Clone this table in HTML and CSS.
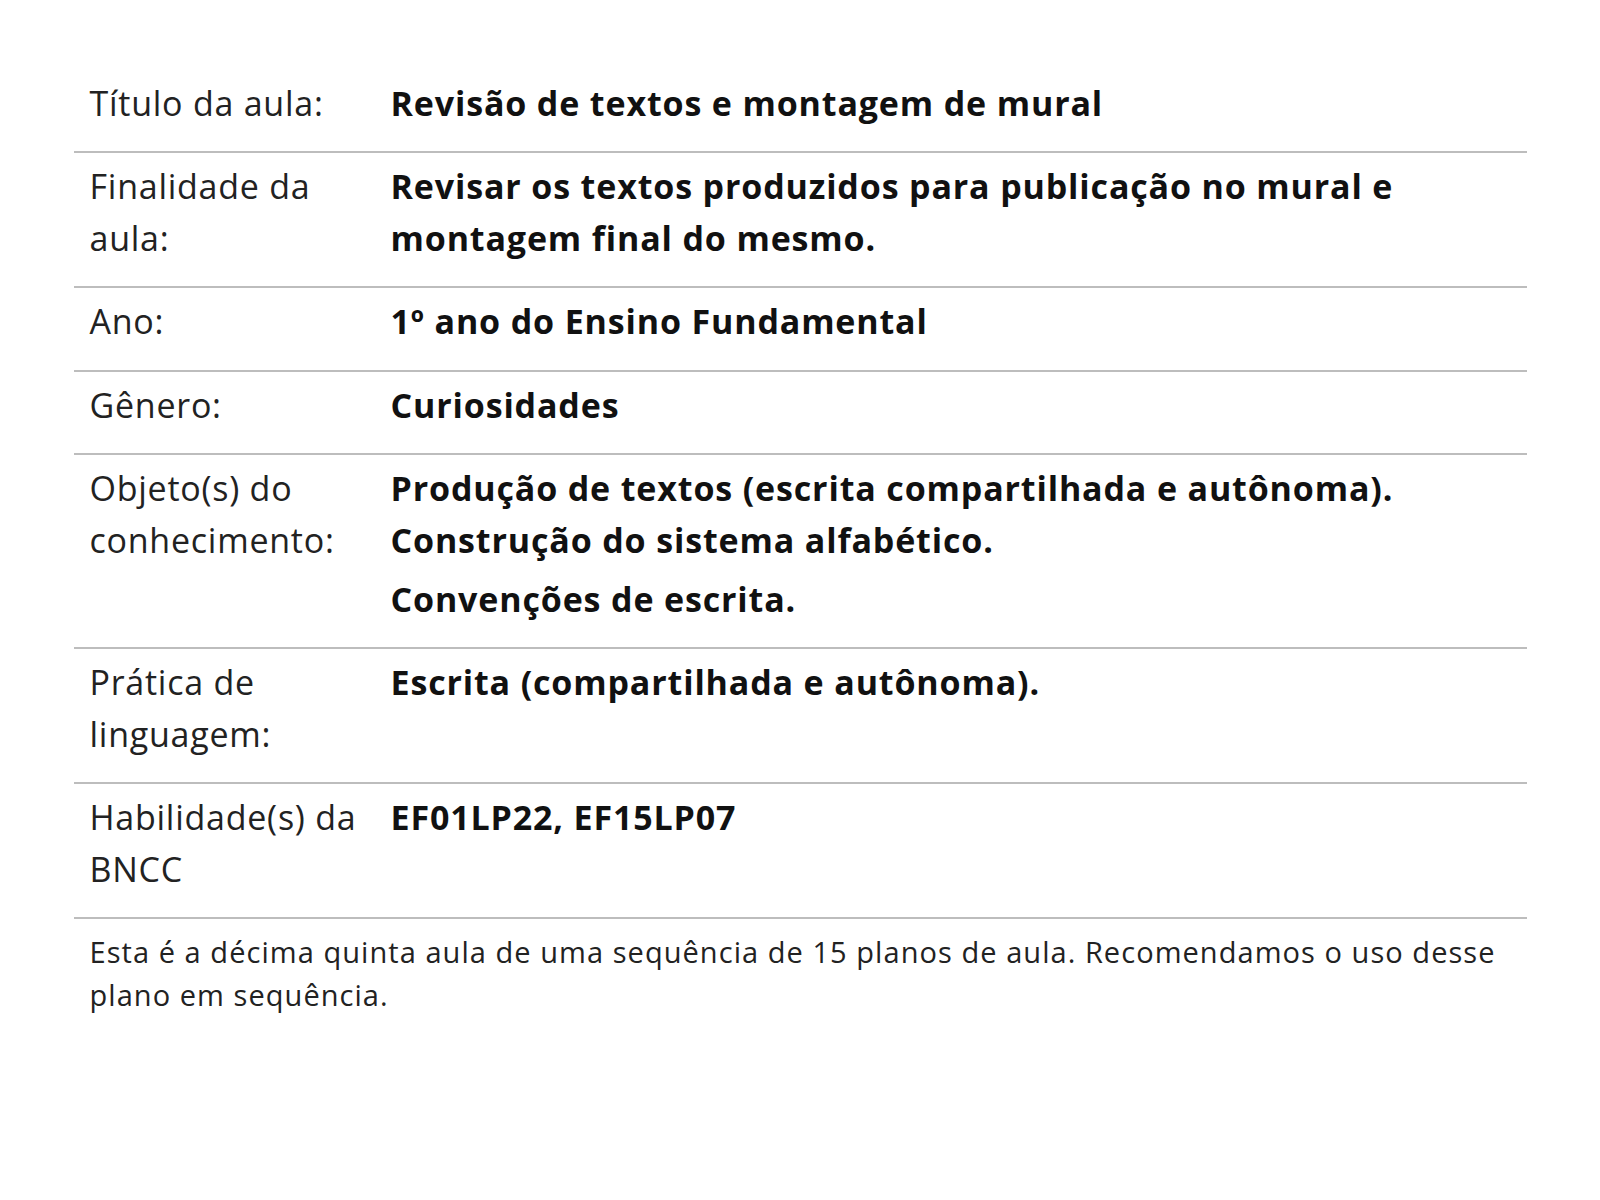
FILE: index.html
```html
<!DOCTYPE html>
<html lang="pt-BR">
<head>
<meta charset="utf-8">
<title>Plano de aula</title>
<link rel="stylesheet" href="styles.css">
</head>
<body>
<main class="plan">
  <div class="row first">
    <div class="label">Título da aula:</div>
    <div class="value"><p>Revisão de textos e montagem de mural</p></div>
  </div>
  <div class="row">
    <div class="label">Finalidade da aula:</div>
    <div class="value"><p>Revisar os textos produzidos para publicação no mural e montagem final do mesmo.</p></div>
  </div>
  <div class="row">
    <div class="label">Ano:</div>
    <div class="value"><p>1º ano do Ensino Fundamental</p></div>
  </div>
  <div class="row">
    <div class="label">Gênero:</div>
    <div class="value"><p>Curiosidades</p></div>
  </div>
  <div class="row">
    <div class="label">Objeto(s) do conhecimento:</div>
    <div class="value"><p>Produção de textos (escrita compartilhada e autônoma).<br>Construção do sistema alfabético.</p><p>Convenções de escrita.</p></div>
  </div>
  <div class="row">
    <div class="label">Prática de linguagem:</div>
    <div class="value"><p>Escrita (compartilhada e autônoma).</p></div>
  </div>
  <div class="row">
    <div class="label">Habilidade(s) da BNCC</div>
    <div class="value"><p>EF01LP22, EF15LP07</p></div>
  </div>
  <div class="note">Esta é a décima quinta aula de uma sequência de 15 planos de aula. Recomendamos o uso desse plano em sequência.</div>
</main>
</body>
</html>
```

FILE: styles.css
```css
html, body {
  margin: 0;
  padding: 0;
  background: #ffffff;
}

body {
  font-family: "Open Sans", "Noto Sans", sans-serif;
  color: #1c1c1c;
}

.plan {
  width: 1453px;
  margin: 69px auto 0;
}

.row {
  display: grid;
  grid-template-columns: 317px 1fr;
  border-top: 2px solid #bdbdbd;
  padding: 7px 0 22.2px;
  font-size: 34px;
  line-height: 52px;
}

.row.first {
  border-top: none;
  padding-top: 8px;
}

.label {
  padding-left: 16px;
  padding-right: 8px;
  font-weight: 400;
  letter-spacing: 0.75px;
  color: #222222;
}

.value {
  font-weight: 700;
  letter-spacing: 0.85px;
  color: #111111;
}

.value p {
  margin: 0;
}

.value p + p {
  margin-top: 7px;
}

.note {
  border-top: 2px solid #bdbdbd;
  padding: 11px 16px 0;
  font-size: 29px;
  line-height: 43px;
  letter-spacing: 1.05px;
  color: #222222;
}
```
